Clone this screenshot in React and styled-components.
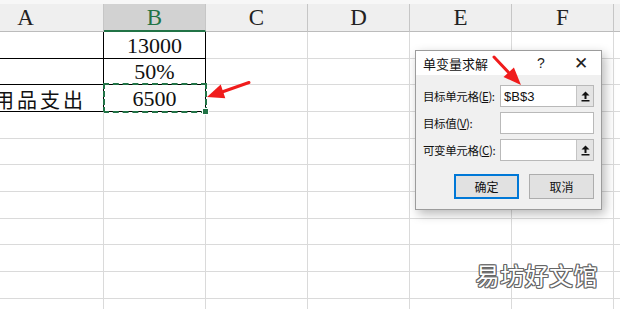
import styled, { createGlobalStyle } from "styled-components";

const GlobalStyle = createGlobalStyle`
  html, body {
    margin: 0;
    padding: 0;
    background: #fff;
  }
`;

const Page = styled.div`
  position: relative;
  width: 620px;
  height: 309px;
  overflow: hidden;
  background: #fff;
`;

const TopStrip = styled.div`
  height: 4px;
  background: #f7f7f7;
`;

const Sheet = styled.div`
  display: grid;
  margin-left: -52px;
  grid-template-columns: 156px repeat(6, 102px);
  grid-template-rows: 28px;
  grid-auto-rows: 26.67px;
`;

const Head = styled.div`
  box-sizing: border-box;
  display: flex;
  align-items: center;
  justify-content: center;
  background: ${(p) => (p.$active ? "#d2d2d2" : "#efefef")};
  border-right: 1px solid #c6c6c6;
  border-bottom: ${(p) => (p.$active ? "2px solid #217346" : "1px solid #bcbcbc")};
  color: ${(p) => (p.$active ? "#217346" : "#222")};
  font-family: "Liberation Serif", "Times New Roman", serif;
  font-size: 23px;
  padding-top: 1px;
`;

const Cell = styled.div`
  position: relative;
  box-sizing: border-box;
  display: flex;
  align-items: center;
  justify-content: ${(p) => (p.$align === "right" ? "flex-end" : "center")};
  padding-right: ${(p) => (p.$align === "right" ? "17px" : "0")};
  border-right: 1px solid ${(p) => (p.$boxed ? "#000" : "#dadada")};
  border-bottom: 1px solid ${(p) => (p.$boxed ? "#000" : "#dadada")};
  font-family: "Liberation Serif", "Noto Sans CJK SC", serif;
  font-size: ${(p) => (p.$align === "right" ? "20px" : "22px")};
  letter-spacing: ${(p) => (p.$align === "right" ? "3px" : "0")};
  color: #111;
  white-space: nowrap;
  padding-top: 2px;

  ${(p) =>
    p.$selected &&
    `
    &::after {
      content: "";
      position: absolute;
      inset: -2px -2px -2px -1px;
      border: 2px dashed #217346;
      pointer-events: none;
    }
    &::before {
      content: "";
      position: absolute;
      right: -4px;
      bottom: -4px;
      width: 5px;
      height: 5px;
      background: #217346;
      border: 1px solid #fff;
      z-index: 2;
    }
  `}
`;

const Dialog = styled.div`
  position: absolute;
  left: 415px;
  top: 50px;
  width: 187px;
  height: 160px;
  box-sizing: border-box;
  border: 1px solid #9c9c9c;
  background: #f0f0f0;
  box-shadow: 3px 4px 10px rgba(0, 0, 0, 0.28);
  display: flex;
  flex-direction: column;
  font-family: "Noto Sans CJK SC", "Liberation Sans", sans-serif;
`;

const TitleBar = styled.div`
  height: 24px;
  background: #fff;
  display: flex;
  align-items: center;
  padding-left: 7px;
  font-size: 13px;
  color: #111;
`;

const TitleText = styled.span`
  flex: 1;
`;

const TitleButton = styled.span`
  width: 40px;
  text-align: center;
  font-size: ${(p) => (p.$close ? "17px" : "14px")};
  font-family: "Liberation Sans", sans-serif;
  font-weight: 300;
  color: #222;
`;

const Body = styled.div`
  flex: 1;
  display: flex;
  flex-direction: column;
  gap: 5px;
  padding: 10px 7px 0 7px;
`;

const FieldRow = styled.div`
  display: grid;
  grid-template-columns: 77px 1fr;
  align-items: center;
  height: 22px;
`;

const Label = styled.label`
  font-size: 11.5px;
  color: #111;
  white-space: nowrap;
  letter-spacing: -0.4px;

  u {
    text-decoration: underline;
  }
`;

const Field = styled.div`
  display: flex;
  height: 22px;
  box-sizing: border-box;
  border: 1px solid #b9b9b9;
  background: #fff;
`;

const FieldText = styled.div`
  flex: 1;
  display: flex;
  align-items: center;
  padding-left: 3px;
  font-family: "Liberation Sans", sans-serif;
  font-size: 13px;
  color: #111;
`;

const RefButton = styled.div`
  width: 16px;
  border-left: 1px solid #c4c4c4;
  background: #e4e4e4;
  display: flex;
  align-items: center;
  justify-content: center;
`;

const Buttons = styled.div`
  display: flex;
  justify-content: flex-end;
  gap: 10px;
  margin-top: 8px;
`;

const Button = styled.div`
  width: 65px;
  height: 25px;
  box-sizing: border-box;
  display: flex;
  align-items: center;
  justify-content: center;
  background: #e1e1e1;
  border: ${(p) => (p.$primary ? "2px solid #0078d7" : "1px solid #adadad")};
  font-size: 12px;
  color: #111;
`;

const Arrows = styled.svg`
  position: absolute;
  left: 0;
  top: 0;
  pointer-events: none;
`;

const Watermark = styled.div`
  position: absolute;
  right: 22px;
  bottom: 17px;
  font-family: "Noto Sans CJK SC", sans-serif;
  font-size: 24px;
  letter-spacing: 0.5px;
  color: #fff;
  text-shadow: 1px 0 #666, -1px 0 #666, 0 1px #666, 0 -1px #666,
    1px 1px #666, -1px -1px #666, 1px -1px #666, -1px 1px #666;
`;

const columns = ["A", "B", "C", "D", "E", "F", "G"];

const rows = [
  { a: "", b: "13000", boxed: true },
  { a: "", b: "50%", boxed: true },
  { a: "用品支出", b: "6500", boxed: true, selected: true },
];
while (rows.length < 11) rows.push({ a: "", b: "" });

const RefIcon = () => (
  <svg width="9" height="11" viewBox="0 0 9 11">
    <path d="M4.5 0.5 L8.5 4.5 H5.5 V8 H3.5 V4.5 H0.5 Z" fill="#111" />
    <rect x="0.5" y="9" width="8" height="1.5" fill="#111" />
  </svg>
);

const App = () => {
  return (
    <Page>
      <GlobalStyle />
      <TopStrip />
      <Sheet>
        {columns.map((c) => (
          <Head key={c} $active={c === "B"}>
            {c === "G" ? "" : c}
          </Head>
        ))}
        {rows.map((r, i) =>
          columns.map((c) => {
            if (c === "A")
              return (
                <Cell key={i + c} $boxed={r.boxed} $align="right">
                  {r.a}
                </Cell>
              );
            if (c === "B")
              return (
                <Cell key={i + c} $boxed={r.boxed} $selected={r.selected}>
                  {r.b}
                </Cell>
              );
            return <Cell key={i + c} />;
          })
        )}
      </Sheet>

      <Dialog>
        <TitleBar>
          <TitleText>单变量求解</TitleText>
          <TitleButton>?</TitleButton>
          <TitleButton $close>✕</TitleButton>
        </TitleBar>
        <Body>
          <FieldRow>
            <Label>
              目标单元格(<u>E</u>):
            </Label>
            <Field>
              <FieldText>$B$3</FieldText>
              <RefButton>
                <RefIcon />
              </RefButton>
            </Field>
          </FieldRow>
          <FieldRow>
            <Label>
              目标值(<u>V</u>):
            </Label>
            <Field>
              <FieldText />
            </Field>
          </FieldRow>
          <FieldRow>
            <Label>
              可变单元格(<u>C</u>):
            </Label>
            <Field>
              <FieldText />
              <RefButton>
                <RefIcon />
              </RefButton>
            </Field>
          </FieldRow>
          <Buttons>
            <Button $primary>确定</Button>
            <Button>取消</Button>
          </Buttons>
        </Body>
      </Dialog>

      <Arrows width="620" height="309" viewBox="0 0 620 309">
        <line x1="249" y1="82.5" x2="222" y2="92" stroke="#f01c1c" strokeWidth="3" strokeLinecap="round" />
        <polygon points="207,97 225.3,98.2 220.7,84.6" fill="#f01c1c" />
        <line x1="494" y1="57" x2="510" y2="74" stroke="#f01c1c" strokeWidth="3" strokeLinecap="round" />
        <polygon points="521,85 503.5,77 513.9,67.6" fill="#f01c1c" />
      </Arrows>

      <Watermark>易坊好文馆</Watermark>
    </Page>
  );
};

export default App;
